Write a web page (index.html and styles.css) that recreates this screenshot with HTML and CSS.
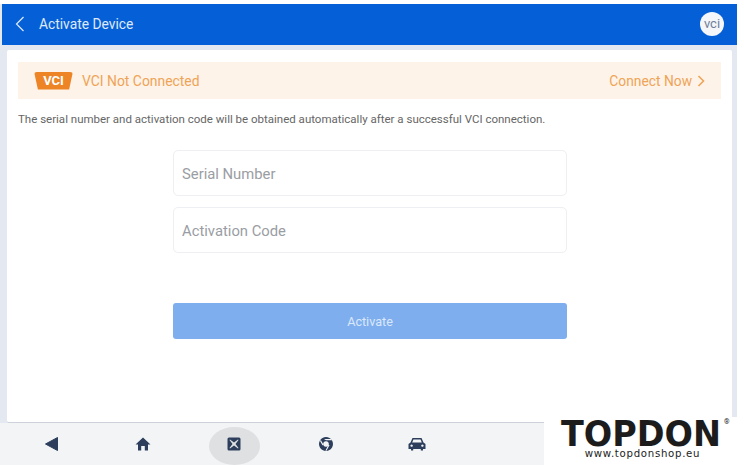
FILE: index.html
```html
<!DOCTYPE html>
<html lang="en">
  <head>
    <meta charset="UTF-8" />
    <title>Activate Device</title>
    <link rel="stylesheet" href="styles.css">
  </head>
  <body>
    <div class="screen">
      <div class="header">
        <svg class="back" width="10" height="16" viewBox="0 0 10 16"><path d="M8.5 1 L1.5 8 L8.5 15" /></svg>
        <span class="title">Activate Device</span>
        <span class="vci-dot">vci</span>
      </div>

      <div class="content">
        <div class="banner">
          <span class="vci-badge">VCI</span>
          <span class="banner-text">VCI Not Connected</span>
          <span class="connect">Connect Now</span>
          <svg class="connect-arrow" width="8" height="12" viewBox="0 0 8 12"><path d="M1.5 1 L6.5 6 L1.5 11" /></svg>
        </div>
        <p class="note">The serial number and activation code will be obtained automatically after a successful VCI connection.</p>

        <div class="form">
          <div class="field">Serial Number</div>
          <div class="field">Activation Code</div>
          <div class="btn">Activate</div>
        </div>
      </div>

      <div class="navbar">
        <div class="nav-item">
          <svg width="16" height="16" viewBox="0 0 16 16"><path d="M13.5 1.5 V14.5 L1.5 8 Z" stroke="#2c3e5c" stroke-linejoin="round" /></svg>
        </div>
        <div class="nav-item">
          <svg width="16" height="16" viewBox="0 0 16 16"><path d="M8 1.5 L15.5 8.5 H13 V14.5 H9.8 V10 H6.2 V14.5 H3 V8.5 H0.5 Z" /></svg>
        </div>
        <div class="nav-item nav-active">
          <svg width="14" height="14" viewBox="0 0 14 14"><path fill-rule="evenodd" d="M2 0.5 H12 A1.5 1.5 0 0 1 13.5 2 V12 A1.5 1.5 0 0 1 12 13.5 H2 A1.5 1.5 0 0 1 0.5 12 V2 A1.5 1.5 0 0 1 2 0.5 Z M3 2.5 L2.5 3 L5.5 7 L2.5 11 L3 11.5 L7 8.5 L11 11.5 L11.5 11 L8.5 7 L11.5 3 L11 2.5 L7 5.5 Z" /></svg>
        </div>
        <div class="nav-item">
          <svg width="16" height="16" viewBox="0 0 16 16"><path fill-rule="evenodd" d="M8 1 A7 7 0 1 1 7.99 1 Z M8 5.2 A2.8 2.8 0 1 0 8.01 5.2 Z" /><path d="M8 4.2 H14 L13.4 3 H6 Z M11.6 9 L8.5 14.8 L7.4 14.8 L10.2 9 Z M4.6 9.6 L2 5 L2.8 4 L5.4 8.4 Z" fill="#f3f4f6" /></svg>
        </div>
        <div class="nav-item">
          <svg width="18" height="14" viewBox="0 0 18 14"><path fill-rule="evenodd" d="M4.5 1 H13.5 L15.5 5.5 L17.5 7 V12 H15 V13.5 H12.8 V12 H5.2 V13.5 H3 V12 H0.5 V7 L2.5 5.5 Z M5.4 2.6 L4.2 5.6 H13.8 L12.6 2.6 Z M3.6 7.4 A1.2 1.2 0 1 0 3.61 7.4 Z M14.4 7.4 A1.2 1.2 0 1 0 14.41 7.4 Z" /></svg>
        </div>
      </div>
    </div>

    <div class="brand">
      <div class="brand-name">TOPDON</div>
      <div class="brand-url">www.topdonshop.eu</div>
      <span class="reg">®</span>
    </div>
  </body>
</html>
```

FILE: styles.css
```css
* {
  margin: 0;
  padding: 0;
  box-sizing: border-box;
}
html,
body {
  width: 744px;
  height: 465px;
  overflow: hidden;
  background: white;
}
body {
  font-family: Roboto, "Liberation Sans", sans-serif;
  position: relative;
}
.screen {
  width: 737px;
  height: 465px;
  margin-top: 4px;
  display: flex;
  flex-direction: column;
  background: #e4e8f0;
}
.header {
  height: 41px;
  margin-left: 2px;
  background: #0560d8;
  color: #dfe9f8;
  display: flex;
  align-items: center;
  padding: 0 13px 2px 13px;
  flex-shrink: 0;
}
.back {
  fill: none;
  stroke: #dfe9f8;
  stroke-width: 1.2;
}
.title {
  font-size: 13.8px;
  margin-left: 14px;
}
.vci-dot {
  margin-left: auto;
  width: 24px;
  height: 24px;
  border-radius: 50%;
  background: #f4f6fa;
  color: #6f7f98;
  font-size: 13px;
  display: flex;
  align-items: center;
  justify-content: center;
}
.content {
  flex: 1;
  margin: 5px 5px 0 7px;
  background: white;
  border-radius: 2px;
  border-bottom: 1px solid #cdd2da;
  padding: 12px 11px 0 11px;
}
.banner {
  height: 37px;
  background: #fef3e8;
  display: flex;
  align-items: center;
  padding: 0 16px;
  color: #eea457;
}
.vci-badge {
  width: 39px;
  height: 18px;
  background: #ed8526;
  color: white;
  font-size: 13px;
  font-weight: 700;
  border-radius: 3px;
  line-height: 18px;
  text-align: center;
  clip-path: polygon(0 0, 100% 0, 90% 100%, 10% 100%);
}
.banner-text {
  font-size: 13.9px;
  margin-left: 9px;
}
.connect {
  margin-left: auto;
  font-size: 13.8px;
}
.connect-arrow {
  margin-left: 5px;
  fill: none;
  stroke: #eea457;
  stroke-width: 1.6;
}
.note {
  margin-top: 14px;
  font-size: 11.5px;
  line-height: 12px;
  color: #666;
}
.form {
  width: 394px;
  margin: 25px 0 0 155px;
}
.field {
  height: 46px;
  border: 1px solid #eeeff2;
  border-radius: 5px;
  padding: 1px 0 0 8px;
  display: flex;
  align-items: center;
  font-size: 14.8px;
  color: #9a9da3;
  margin-bottom: 11px;
}
.btn {
  margin-top: 50px;
  height: 36px;
  background: #7eaeee;
  color: #dbe8fa;
  border-radius: 3px;
  display: flex;
  align-items: center;
  justify-content: center;
  font-size: 12.6px;
}
.navbar {
  height: 42px;
  flex-shrink: 0;
  background: #f3f4f6;
  display: flex;
  padding-left: 6px;
  margin-bottom: 4px;
}
.nav-item {
  width: 91.4px;
  display: flex;
  align-items: center;
  justify-content: center;
}
.nav-item svg {
  fill: #2c3e5c;
}
.nav-active {
  position: relative;
}
.nav-active::before {
  content: "";
  position: absolute;
  left: 20px;
  top: 4px;
  width: 51px;
  height: 38px;
  border-radius: 50%;
  background: #dfe0e2;
}
.nav-active svg {
  position: relative;
}
.brand {
  position: absolute;
  right: 0;
  bottom: 0;
  width: 200px;
  height: 48px;
  background: white;
  color: #1c1c1c;
  padding-top: 3px;
}
.brand-name {
  font-family: "DejaVu Sans", sans-serif;
  font-weight: 700;
  font-size: 36px;
  line-height: 28px;
  text-align: center;
  transform: translateX(-3px) scaleX(0.93);
}
.reg {
  position: absolute;
  left: 180px;
  top: 1px;
  font-size: 7px;
  line-height: 8px;
}
.brand-url {
  font-family: "DejaVu Sans", sans-serif;
  font-size: 10.2px;
  letter-spacing: 0.7px;
  line-height: 12px;
  text-align: center;
  padding-right: 3px;
}
```
